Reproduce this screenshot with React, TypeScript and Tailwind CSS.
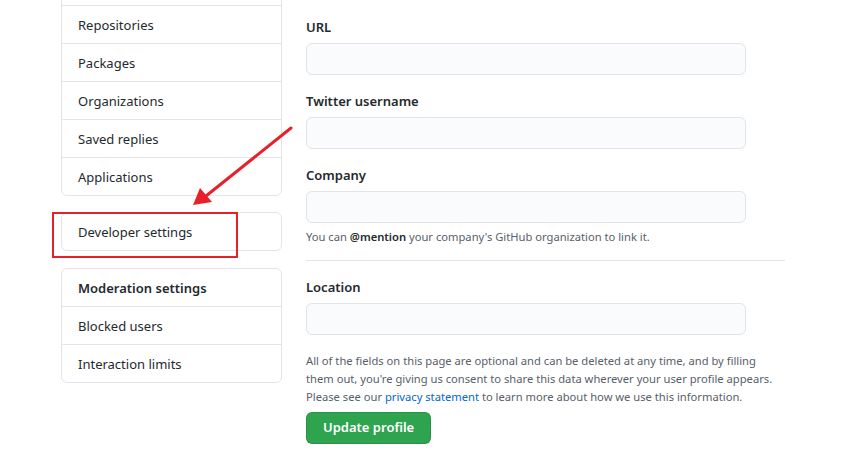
import React from "react";

const font = { fontFamily: '"Noto Sans", "Open Sans", Arial, sans-serif' };

function Row({ children, first, bold }: { children?: React.ReactNode; first?: boolean; bold?: boolean }) {
  return (
    <div
      className={`flex items-center pl-4 pt-[2px] text-[13px] text-[#24292e] ${first ? "h-[37px]" : "h-[38px] border-t border-[#e1e4e8]"} ${bold ? "font-semibold" : ""}`}
    >
      {children}
    </div>
  );
}

function Field({ label }: { label: string }) {
  return (
    <div className="flex flex-col">
      <label className="text-[13px] leading-[20px] font-semibold text-[#24292e]">{label}</label>
      <div className="mt-[6px] h-[32px] w-[440px] rounded-[6px] border border-[#e1e4e8] bg-[#fafbfc]" />
    </div>
  );
}

export default function App() {
  return (
    <div className="relative w-[861px] h-[451px] overflow-hidden bg-white" style={font}>
      <div className="flex gap-6 pl-[61px]">
        <div className="w-[221px] flex flex-col mt-[-33px]">
          <div className="rounded-[6px] border border-[#e1e4e8] bg-white">
            <Row first />
            <Row>Repositories</Row>
            <Row>Packages</Row>
            <Row>Organizations</Row>
            <Row>Saved replies</Row>
            <Row>Applications</Row>
          </div>
          <div className="mt-4 rounded-[6px] border border-[#e1e4e8] bg-white">
            <Row first>Developer settings</Row>
          </div>
          <div className="mt-[17px] rounded-[6px] border border-[#e1e4e8] bg-white">
            <Row first bold>Moderation settings</Row>
            <Row>Blocked users</Row>
            <Row>Interaction limits</Row>
          </div>
        </div>
        <div className="flex flex-col w-[479px] pt-[17px]">
          <Field label="URL" />
          <div className="mt-4">
            <Field label="Twitter username" />
          </div>
          <div className="mt-4">
            <Field label="Company" />
          </div>
          <p className="mt-[5px] text-[11.2px] leading-[18px] text-[#586069]">
            You can <span className="font-semibold text-[#24292e]">@mention</span> your company's GitHub organization to link it.
          </p>
          <div className="mt-[14px] border-t border-[#e1e4e8]" />
          <div className="mt-4">
            <Field label="Location" />
          </div>
          <p className="mt-[17px] text-[11.2px] leading-[18px] text-[#586069]">
            All of the fields on this page are optional and can be deleted at any time, and by filling
            <br />
            them out, you're giving us consent to share this data wherever your user profile appears.
            <br />
            Please see our <span className="text-[#0366d6]">privacy statement</span> to learn more about how we use this information.
          </p>
          <div className="mt-[6px]">
            <button className="h-[32px] px-4 rounded-[6px] border border-[rgba(27,31,35,0.15)] bg-[#2ea44f] text-white text-[13px] font-semibold">
              Update profile
            </button>
          </div>
        </div>
      </div>
      <svg className="absolute left-0 top-0 pointer-events-none" width="861" height="451">
        <rect x="53" y="213" width="184" height="44" fill="none" stroke="#e8202a" strokeWidth="2" />
        <line x1="291" y1="128" x2="206" y2="196" stroke="#e8202a" strokeWidth="3" strokeLinecap="round" />
        <polygon points="193,205 200,188 212,202" fill="#e8202a" />
      </svg>
    </div>
  );
}
